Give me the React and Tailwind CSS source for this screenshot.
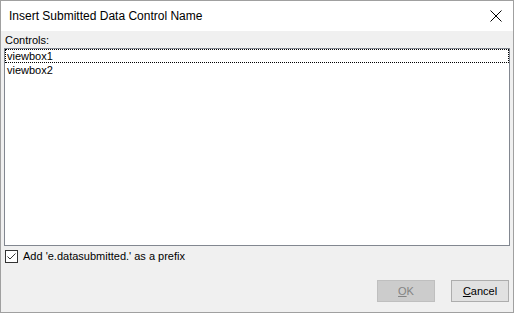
export default function App() {
  return (
    <div
      className="w-[514px] h-[313px] border border-[#a0a0a0] bg-[#f0f0f0] flex flex-col text-[11px] text-black"
      style={{ fontFamily: '"Liberation Sans", "Noto Sans", sans-serif' }}
    >
      <div className="h-[30px] bg-white flex items-center justify-between pl-[8px] pr-[10px] shrink-0">
        <span className="leading-none text-[12px]">Insert Submitted Data Control Name</span>
        <svg width="12" height="12" viewBox="0 0 12 12" className="mr-[1px]">
          <path d="M0.5 0.5 L11.5 11.5 M11.5 0.5 L0.5 11.5" stroke="#000" strokeWidth="1" fill="none" />
        </svg>
      </div>
      <div className="flex-1 flex flex-col px-[3px]">
        <div className="h-[17px] flex items-end pl-[1px] leading-none pb-[2px]">Controls:</div>
        <div className="h-[198px] border border-[#828790] bg-white flex flex-col">
          <div className="h-[14px] border border-dotted border-black flex items-center pl-[1px] leading-none">
            viewbox1
          </div>
          <div className="h-[14px] flex items-center pl-[2px] leading-none">viewbox2</div>
        </div>
        <div className="flex items-center mt-[4px] pl-[1px] gap-[5px]">
          <div className="w-[13px] h-[13px] border border-[#333] bg-white flex items-center justify-center">
            <svg width="11" height="11" viewBox="0 0 11 11">
              <path d="M1.5 5.5 L4 8 L9.5 2.5" stroke="#333" strokeWidth="1" fill="none" />
            </svg>
          </div>
          <span className="leading-none">Add 'e.datasubmitted.' as a prefix</span>
        </div>
        <div className="flex justify-end gap-[16px] mt-[17px] pr-[1px]">
          <div className="w-[58px] h-[22px] border border-[#bfbfbf] bg-[#cccccc] text-[#838383] flex items-center justify-center leading-none">
            <span><span className="underline">O</span>K</span>
          </div>
          <div className="w-[58px] h-[22px] border border-[#adadad] bg-[#e1e1e1] flex items-center justify-center leading-none">
            <span><span className="underline">C</span>ancel</span>
          </div>
        </div>
      </div>
    </div>
  );
}
